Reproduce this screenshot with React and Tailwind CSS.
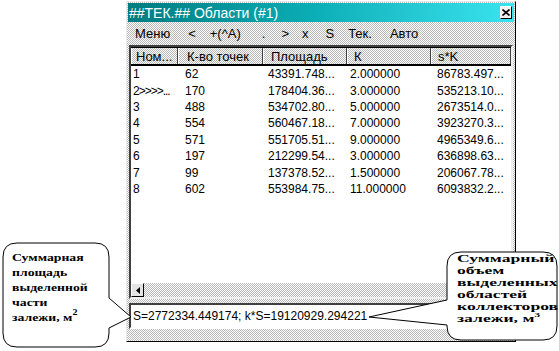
const rows = [
  ['1', '62', '43391.748...', '2.000000', '86783.497...'],
  ['2>>>>...', '170', '178404.36...', '3.000000', '535213.10...'],
  ['3', '488', '534702.80...', '5.000000', '2673514.0...'],
  ['4', '554', '560467.18...', '7.000000', '3923270.3...'],
  ['5', '571', '551705.51...', '9.000000', '4965349.6...'],
  ['6', '197', '212299.54...', '3.000000', '636898.63...'],
  ['7', '99', '137378.52...', '1.500000', '206067.78...'],
  ['8', '602', '553984.75...', '11.000000', '6093832.2...'],
]

const cols = [
  { title: 'Ном...', w: 'w-[47px]', hp: 'pl-[4px]', dp: 'pl-[2px]' },
  { title: 'К-во точек', w: 'w-[85px]', hp: 'pl-[8px]', dp: 'pl-[7px]' },
  { title: 'Площадь', w: 'w-[84px]', hp: 'pl-[7px]', dp: 'pl-[5px]' },
  { title: 'К', w: 'w-[84px]', hp: 'pl-[6px]', dp: 'pl-[3px]' },
  { title: 's*K', w: 'flex-1', hp: 'pl-[6px]', dp: 'pl-[6px]' },
]

const menu = [
  ['Меню', 'ml-[7px]'],
  ['<', 'ml-[18px]'],
  ['+(^A)', 'ml-[14px]'],
  ['.', 'ml-[21px]'],
  ['>', 'ml-[16px]'],
  ['x', 'ml-[13px]'],
  ['S', 'ml-[17px]'],
  ['Тек.', 'ml-[14px]'],
  ['Авто', 'ml-[18px]'],
]

const dither =
  'bg-[image:repeating-conic-gradient(#b8b8b8_0%_25%,#ffffff_0%_50%)] bg-[length:2px_2px]'

const serif = { fontFamily: '"Liberation Serif", "Times New Roman", serif' }

function Callout({ d }) {
  return (
    <svg className="absolute left-0 top-0" width="559" height="351">
      <path d={d} fill="#fff" stroke="#000" strokeWidth="1" />
    </svg>
  )
}

export default function App() {
  return (
    <div
      className="relative w-[559px] h-[351px] overflow-hidden bg-white pl-[126px] pt-[1px]"
      style={{ fontFamily: '"Liberation Sans", Arial, sans-serif' }}
    >
      {/* window */}
      <div className={`w-[390px] h-[341px] flex flex-col border border-t-[#e8e8e8] border-l-[#e8e8e8] border-r-black border-b-black p-[1px] ${dither}`}>
        {/* title bar */}
        <div className="h-[19px] flex items-center justify-between bg-gradient-to-r from-[#007c80] via-[#0cb0b8] to-[#38e4f0] text-white text-[14px] leading-none pl-[1px] pr-[2px]">
          <span>##ТЕК.## Области (#1)</span>
          <div className="w-[12px] h-[13px] flex items-center justify-center bg-[#f0f0f0] border border-t-white border-l-white border-r-black border-b-black">
            <svg width="8" height="7" viewBox="0 0 8 7">
              <path d="M0.5 0.5 L7.5 6.5 M7.5 0.5 L0.5 6.5" stroke="#000" strokeWidth="1.6" />
            </svg>
          </div>
        </div>

        {/* menu bar */}
        <div className="h-[20px] flex items-center text-[13px] text-black leading-none pt-[2px]">
          {menu.map(([t, m]) => (
            <span key={t} className={m}>{t}</span>
          ))}
        </div>

        {/* list view */}
        <div className="mt-[3px] ml-[1px] mr-[1px] h-[254px] flex flex-col border-2 border-t-[#404040] border-l-[#404040] border-r-[#f0f0f0] border-b-[#f0f0f0] bg-white">
          <div className={`h-[19px] flex border-t border-b-2 border-black text-[13px] leading-none text-black ${dither}`}>
            {cols.map((c) => (
              <div key={c.title} className={`${c.w} ${c.hp} flex items-center border-r border-[#404040] border-l border-l-white whitespace-nowrap overflow-hidden`}>
                {c.title}
              </div>
            ))}
          </div>
          <div className="flex-1 text-[12px] text-black leading-none">
            {rows.map((r, i) => (
              <div key={i} className="h-[16.4px] flex items-center">
                {r.map((v, j) => (
                  <div key={j} className={`${cols[j].w} ${cols[j].dp} whitespace-nowrap ${j === 0 && i === 1 ? 'tracking-[-1px]' : ''}`}>
                    {v}
                  </div>
                ))}
              </div>
            ))}
          </div>
          {/* horizontal scrollbar */}
          <div className={`h-[14px] flex ${dither}`}>
            <div className="w-[13px] h-[14px] flex items-center justify-center bg-[#e4e4e4] border border-t-white border-l-white border-r-black border-b-black">
              <svg width="4" height="7" viewBox="0 0 4 7">
                <path d="M4 0 L0 3.5 L4 7 Z" fill="#000" />
              </svg>
            </div>
          </div>
        </div>

        {/* status field */}
        <div className="mt-[4px] ml-[1px] mr-[1px] h-[26px] flex items-center border-2 border-t-[#404040] border-l-[#404040] border-r-white border-b-white bg-white pl-[2px] text-[12px] text-black leading-none">
          S=2772334.449174; k*S=19120929.294221
        </div>
      </div>

      {/* left callout */}
      <Callout d="M17 243 H95 Q109 243 109 257 V298 L131 317 L109 328 V333 Q109 347 95 347 H17 Q3 347 3 333 V257 Q3 243 17 243 Z" />
      <div
        className="absolute left-[12px] top-[252px] text-[11px] font-bold leading-none text-black origin-left scale-x-[1.25]"
        style={serif}
      >
        <div className="h-[15px]">Суммарная</div>
        <div className="h-[15px]">площадь</div>
        <div className="h-[15px]">выделенной</div>
        <div className="h-[15px]">части</div>
        <div className="h-[15px] flex items-start">
          залежи, м<span className="text-[8px] -mt-[3px]">2</span>
        </div>
      </div>

      {/* right callout */}
      <Callout d="M461 252 H543 Q557 252 557 266 V326 Q557 340 543 340 H461 Q447 340 447 326 V325 L369 317 L447 300 V266 Q447 252 461 252 Z" />
      <div
        className="absolute left-[457px] top-[253px] text-[11px] font-bold leading-none text-black origin-left scale-x-[1.6]"
        style={serif}
      >
        <div className="h-[12px]">Суммарный</div>
        <div className="h-[12px]">объем</div>
        <div className="h-[12px]">выделенных</div>
        <div className="h-[12px]">областей</div>
        <div className="h-[12px]">коллекторов</div>
        <div className="h-[12px] flex items-start">
          залежи, м<span className="text-[7px] -mt-[1px] leading-none">3</span>
        </div>
      </div>
    </div>
  )
}
